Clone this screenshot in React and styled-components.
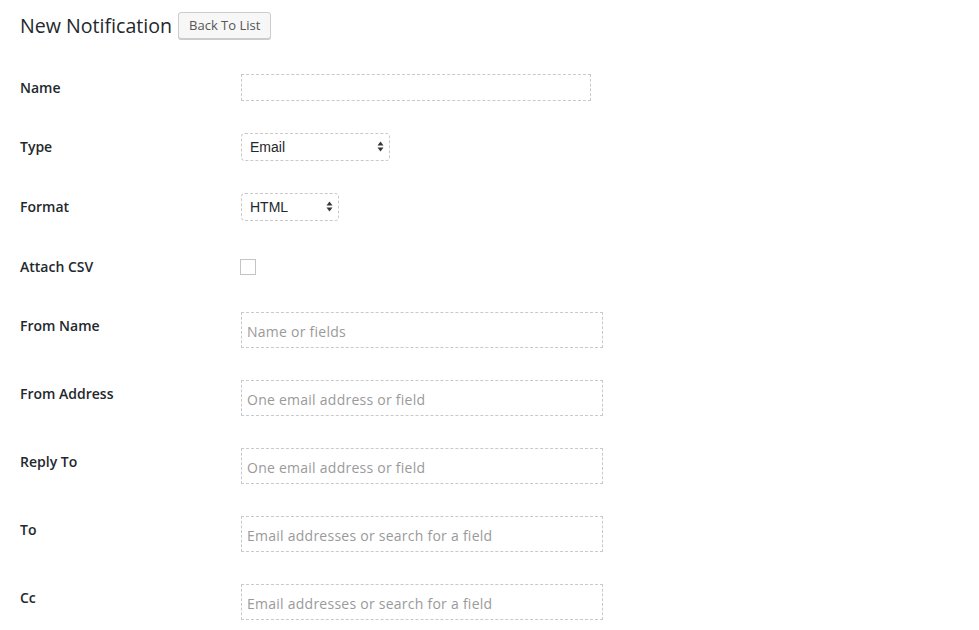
import React from 'react'
import styled, { createGlobalStyle } from 'styled-components'

const GlobalStyle = createGlobalStyle`
  html, body {
    margin: 0;
    padding: 0;
    background: #fff;
  }
  body {
    font-family: 'Open Sans', 'Noto Sans', sans-serif;
    color: #23282d;
    font-size: 14px;
  }
`

const fields = [
  { label: 'Name', kind: 'text', height: 60 },
  { label: 'Type', kind: 'select', options: ['Email'], width: 149, height: 60 },
  { label: 'Format', kind: 'select', options: ['HTML'], width: 98, height: 60 },
  { label: 'Attach CSV', kind: 'checkbox', height: 59 },
  { label: 'From Name', kind: 'tall', placeholder: 'Name or fields', height: 68 },
  { label: 'From Address', kind: 'tall', placeholder: 'One email address or field', height: 68 },
  { label: 'Reply To', kind: 'tall', placeholder: 'One email address or field', height: 68 },
  { label: 'To', kind: 'tall', placeholder: 'Email addresses or search for a field', height: 68 },
  { label: 'Cc', kind: 'tall', placeholder: 'Email addresses or search for a field', height: 68 }
]

const Arrows = () => (
  <svg width='7' height='11' viewBox='0 0 7 11'>
    <path d='M3.5 0.5 L6.5 4.5 L0.5 4.5 Z' fill='#32373c' />
    <path d='M3.5 10.5 L6.5 6.5 L0.5 6.5 Z' fill='#32373c' />
  </svg>
)

const Control = ({ field }) => {
  if (field.kind === 'text') return <TextInput type='text' />
  if (field.kind === 'tall') return <TallInput type='text' placeholder={field.placeholder} />
  if (field.kind === 'checkbox') return <Checkbox type='checkbox' />
  return (
    <SelectWrap $width={field.width}>
      <Select>
        {field.options.map(o => <option key={o}>{o}</option>)}
      </Select>
      <ArrowSlot><Arrows /></ArrowSlot>
    </SelectWrap>
  )
}

const App = () => {
  return (
    <Page>
      <GlobalStyle />
      <Header>
        <Title>New Notification</Title>
        <Button type='button'>Back To List</Button>
      </Header>
      <Form>
        {fields.map(f => (
          <Row key={f.label} $height={f.height}>
            <Label>{f.label}</Label>
            <Control field={f} />
          </Row>
        ))}
      </Form>
    </Page>
  )
}

const Page = styled.div`
  padding: 12px 20px 0;
  height: 630px;
  box-sizing: border-box;
  overflow: hidden;
`

const Header = styled.div`
  display: flex;
  align-items: center;
  gap: 6px;
  height: 27px;
`

const Title = styled.h1`
  margin: 0;
  font-size: 19.6px;
  font-weight: 400;
  line-height: 27px;
  color: #23282d;
`

const Button = styled.button`
  height: 27px;
  padding: 0 10px;
  font-family: inherit;
  font-size: 13px;
  color: #555;
  background: #f7f7f7;
  border: 1px solid #ccc;
  border-radius: 3px;
  box-shadow: 0 1px 0 #ccc;
  line-height: 25px;
  cursor: pointer;
`

const Form = styled.div`
  display: flex;
  flex-direction: column;
  margin-top: 18px;
`

const Row = styled.div`
  display: grid;
  grid-template-columns: 221px auto;
  align-items: center;
  justify-items: start;
  height: ${p => p.$height}px;
  &:first-child > div {
    padding-top: 22px;
  }
`

const Label = styled.div`
  align-self: start;
  padding-top: 21px;
  font-size: 14px;
  font-weight: 600;
  line-height: 18px;
  color: #23282d;
`

const baseInput = `
  box-sizing: border-box;
  margin: 0;
  border: 1px dashed #c9c9c9;
  background: #fff;
  font-family: 'Open Sans', 'Noto Sans', sans-serif;
  font-size: 14px;
  color: #32373c;
  outline: none;
  &::placeholder {
    color: #9a9a9a;
    letter-spacing: 0.25px;
  }
`

const TextInput = styled.input`
  ${baseInput}
  width: 350px;
  height: 27px;
  padding: 0 5px;
`

const TallInput = styled.input`
  ${baseInput}
  width: 362px;
  height: 36px;
  padding: 2px 5px 0;
`

const SelectWrap = styled.span`
  position: relative;
  display: inline-block;
  width: ${p => p.$width}px;
  height: 28px;
`

const Select = styled.select`
  ${baseInput}
  appearance: none;
  width: 100%;
  height: 100%;
  padding: 0 20px 0 8px;
  border-radius: 4px;
  font-family: 'Liberation Sans', Arial, sans-serif;
  color: #23282d;
`

const ArrowSlot = styled.span`
  position: absolute;
  right: 6px;
  top: 8px;
  line-height: 0;
  pointer-events: none;
`

const Checkbox = styled.input`
  appearance: none;
  box-sizing: border-box;
  width: 16px;
  height: 16px;
  margin: 0 0 0 -1px;
  border: 1px solid #c4c4c4;
  background: #fff;
`

export default App
